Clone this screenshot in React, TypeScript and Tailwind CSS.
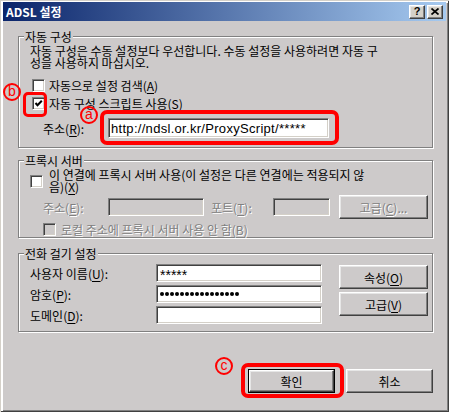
import type { ReactNode } from 'react';

const raised =
  'border border-t-white border-l-white border-b-[#404040] border-r-[#404040] shadow-[inset_-1px_-1px_0_#808080,inset_1px_1px_0_#e6e6e6]';
const sunken =
  'border border-t-[#808080] border-l-[#808080] border-b-white border-r-white shadow-[inset_1px_1px_0_#404040,inset_-1px_-1px_0_#d4d0c8]';
const dim = 'text-[#808080] [text-shadow:1px_1px_0_#fff]';

function Key({ k }: { k: string }) {
  return (
    <>
      (<u className="underline-offset-[2px]">{k}</u>)
    </>
  );
}

function Check({ on, off }: { on?: boolean; off?: boolean }) {
  return (
    <span
      className={`${sunken} flex h-[13px] w-[13px] shrink-0 items-center justify-center ${off ? 'bg-[#cdcaca]' : 'bg-white'}`}
    >
      {on && (
        <svg width="9" height="9" viewBox="0 0 9 9">
          <path d="M1.5 4 L3.5 6.2 L7.8 1.8" fill="none" stroke="#000" strokeWidth="2" />
        </svg>
      )}
    </span>
  );
}

function Group({ title, className, children }: { title: string; className: string; children: ReactNode }) {
  return (
    <div
      className={`relative ml-[18px] w-[415px] border border-[#808080] shadow-[1px_1px_0_#fff,inset_1px_1px_0_#fff] ${className}`}
    >
      <span className="absolute -top-[7px] left-[5px] bg-[#cdcaca] px-[1px] text-[12px] leading-[13px]">{title}</span>
      {children}
    </div>
  );
}

function Btn({ children, className = '' }: { children: ReactNode; className?: string }) {
  return (
    <div className={`${raised} flex items-center justify-center bg-[#cdcaca] text-[12px] leading-[13px] ${className}`}>
      {children}
    </div>
  );
}

function Mark({ ch, className }: { ch: string; className: string }) {
  return (
    <div
      className={`absolute flex h-[18px] w-[18px] items-center justify-center rounded-full border-2 border-[#ff0000] pb-[2px] font-['Liberation_Sans',sans-serif] text-[14px] leading-none text-[#ff0000] ${className}`}
    >
      {ch}
    </div>
  );
}

const dots = Array.from({ length: 16 });

export default function App() {
  return (
    <div className="relative h-[412px] w-[449px] overflow-hidden bg-[#cdcaca] font-['Noto_Sans_CJK_KR','Liberation_Sans',sans-serif] text-black shadow-[inset_1px_1px_0_#d4d0c8,inset_-1px_-1px_0_#404040,inset_3px_3px_0_#fff,inset_-2px_-2px_0_#808080]">
      {/* title bar */}
      <div className="mx-[3px] mt-[2px] flex h-[19px] items-center justify-between bg-[linear-gradient(to_right,#0a246a,#a6caf0)] pl-[3px] pr-[3px]">
        <span className="text-[12px] leading-[14px] font-bold text-white">ADSL 설정</span>
        <div className="flex gap-[2px]">
          <span
            className={`${raised} flex h-[14px] w-[16px] items-center justify-center bg-[#d4d0c8] font-['Liberation_Sans',sans-serif] text-[11px] leading-none font-bold`}
          >
            ?
          </span>
          <span className={`${raised} flex h-[14px] w-[16px] items-center justify-center bg-[#d4d0c8]`}>
            <svg width="8" height="7" viewBox="0 0 8 7">
              <path d="M0.5 0.5 L7.5 6.5 M7.5 0.5 L0.5 6.5" stroke="#000" strokeWidth="1.7" />
            </svg>
          </span>
        </div>
      </div>

      {/* 자동 구성 */}
      <Group title="자동 구성" className="mt-[15px] h-[112px]">
        <div className="pl-[11px] pt-[8px] text-[12px] leading-[12px]">
          자동 구성은 수동 설정보다 우선합니다. 수동 설정을 사용하려면 자동 구<br />
          성을 사용하지 마십시오.
        </div>
        <div className="mt-[10px] flex items-center gap-[4px] pl-[13px] text-[12px] leading-[13px]">
          <Check />
          <span>
            자동으로 설정 검색<Key k="A" />
          </span>
        </div>
        <div className="mt-[5px] flex items-center gap-[4px] pl-[13px] text-[12px] leading-[13px]">
          <Check on />
          <span>
            자동 구성 스크립트 사용<Key k="S" />
          </span>
        </div>
        <div className="mt-[8px] flex items-center pl-[24px] text-[12px] leading-[13px]">
          <span className="w-[65px]">
            주소<Key k="R" />:
          </span>
          <div
            className={`${sunken} flex h-[20px] w-[221px] items-center bg-white pl-[2px] font-['Liberation_Sans',sans-serif] text-[13px] tracking-[0.3px]`}
          >
            http://ndsl.or.kr/ProxyScript/*****
          </div>
        </div>
      </Group>

      {/* 프록시 서버 */}
      <Group title="프록시 서버" className="mt-[12px] h-[78px]">
        <div className="mt-[8px] flex items-center gap-[6px] pl-[11px] text-[12px] leading-[12px]">
          <Check />
          <span>
            이 연결에 프록시 서버 사용(이 설정은 다른 연결에는 적용되지 않<br />
            음)<Key k="X" />
          </span>
        </div>
        <div className={`mt-[2px] flex items-center pl-[24px] text-[12px] leading-[13px] ${dim}`}>
          <span className="w-[65px]">
            주소<Key k="E" />:
          </span>
          <div className={`${sunken} h-[18px] w-[96px]`} />
          <span className="ml-[7px] w-[62px]">
            포트<Key k="T" />:
          </span>
          <div className={`${sunken} h-[18px] w-[57px]`} />
          <Btn className="ml-[9px] h-[24px] w-[89px]">
            고급<Key k="C" />...
          </Btn>
        </div>
        <div className="mt-[4px] flex items-center gap-[5px] pl-[24px] text-[12px] leading-[13px]">
          <Check off />
          <span className={dim}>
            로컬 주소에 프록시 서버 사용 안 함<Key k="B" />
          </span>
        </div>
      </Group>

      {/* 전화 걸기 설정 */}
      <Group title="전화 걸기 설정" className="mt-[15px] h-[79px]">
        <div className="flex pl-[11px] pt-[10px] text-[12px] leading-[13px]">
          <div className="grid grid-cols-[126px_166px] items-center gap-y-[3px]">
            <span>
              사용자 이름<Key k="U" />:
            </span>
            <div
              className={`${sunken} flex h-[18px] items-center bg-white pl-[3px] font-['Liberation_Sans',sans-serif] text-[14px] leading-none`}
            >
              <span className="mt-[4px]">*****</span>
            </div>
            <span>
              암호<Key k="P" />:
            </span>
            <div className={`${sunken} flex h-[18px] items-center gap-[1px] bg-white pl-[3px]`}>
              {dots.map((_, i) => (
                <span key={i} className="h-[4px] w-[4px] rounded-full bg-black" />
              ))}
            </div>
            <span>
              도메인<Key k="D" />:
            </span>
            <div className={`${sunken} h-[18px] bg-white`} />
          </div>
          <div className="ml-[17px] flex flex-col gap-[3px] pt-[1px]">
            <Btn className="h-[24px] w-[89px]">
              속성<Key k="O" />
            </Btn>
            <Btn className="h-[24px] w-[89px]">
              고급<Key k="V" />
            </Btn>
          </div>
        </div>
      </Group>

      {/* dialog buttons */}
      <div className="mt-[37px] flex gap-[11px] pl-[248px]">
        <div className="h-[24px] w-[87px] border border-black">
          <Btn className="h-full w-full">확인</Btn>
        </div>
        <Btn className="h-[24px] w-[87px]">취소</Btn>
      </div>

      {/* red annotations */}
      <div className="absolute left-[23px] top-[92px] h-[25px] w-[24px] rounded-[5px] border-[3px] border-[#ff0000]" />
      <Mark ch="b" className="left-[3px] top-[83px]" />
      <div className="absolute left-[100px] top-[110px] h-[35px] w-[239px] rounded-[7px] border-[4px] border-[#ff0000]" />
      <Mark ch="a" className="left-[80px] top-[106px]" />
      <div className="absolute left-[241px] top-[363px] h-[35px] w-[103px] rounded-[7px] border-[4px] border-[#ff0000]" />
      <Mark ch="c" className="left-[215px] top-[357px]" />
    </div>
  );
}
